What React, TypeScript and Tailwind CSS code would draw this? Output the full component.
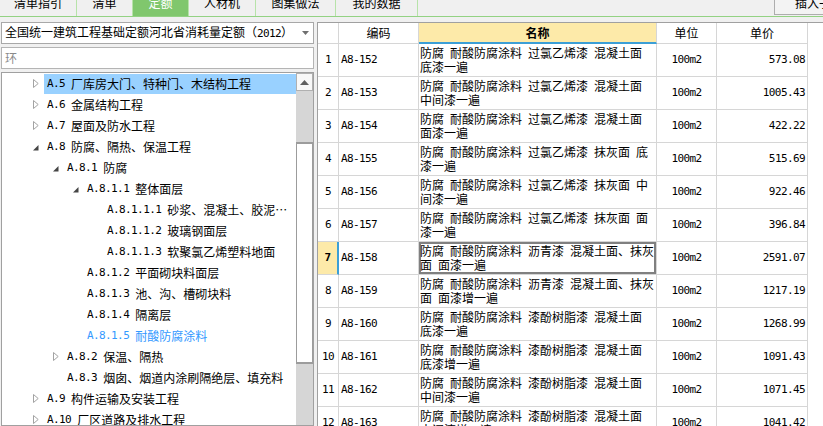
import React from "react";

const CJK = "font-['Noto_Sans_CJK_SC','Noto_Sans_CJK_JP',sans-serif]";
const MONO = "font-['DejaVu_Sans_Mono','Liberation_Mono',monospace] text-[11px] tracking-[-0.6px]";

const TABS = [
  { label: "清单指引", w: "w-[77px]" },
  { label: "清单", w: "w-[56px]" },
  { label: "定额", w: "w-[56px]", active: true },
  { label: "人材机", w: "w-[67px]" },
  { label: "图集做法", w: "w-[80px]" },
  { label: "我的数据", w: "w-[82px]" },
];

type TreeNode = {
  code: string;
  name: string;
  level: number;
  exp?: "open" | "closed";
  selected?: boolean;
  current?: boolean;
};

const TREE: TreeNode[] = [
  { code: "A.5", name: "厂库房大门、特种门、木结构工程", level: 0, exp: "closed", selected: true },
  { code: "A.6", name: "金属结构工程", level: 0, exp: "closed" },
  { code: "A.7", name: "屋面及防水工程", level: 0, exp: "closed" },
  { code: "A.8", name: "防腐、隔热、保温工程", level: 0, exp: "open" },
  { code: "A.8.1", name: "防腐", level: 1, exp: "open" },
  { code: "A.8.1.1", name: "整体面层", level: 2, exp: "open" },
  { code: "A.8.1.1.1", name: "砂浆、混凝土、胶泥…", level: 3 },
  { code: "A.8.1.1.2", name: "玻璃钢面层", level: 3 },
  { code: "A.8.1.1.3", name: "软聚氯乙烯塑料地面", level: 3 },
  { code: "A.8.1.2", name: "平面砌块料面层", level: 2 },
  { code: "A.8.1.3", name: "池、沟、槽砌块料", level: 2 },
  { code: "A.8.1.4", name: "隔离层", level: 2 },
  { code: "A.8.1.5", name: "耐酸防腐涂料", level: 2, current: true },
  { code: "A.8.2", name: "保温、隔热", level: 1, exp: "closed" },
  { code: "A.8.3", name: "烟囱、烟道内涂刷隔绝层、填充料", level: 1 },
  { code: "A.9", name: "构件运输及安装工程", level: 0, exp: "closed" },
  { code: "A.10", name: "厂区道路及排水工程", level: 0, exp: "closed" },
];

const INDENT = ["pl-[28px]", "pl-[48px]", "pl-[68px]", "pl-[88px]"];

const ROWS = [
  { no: 1, code: "A8-152", l1: "防腐 耐酸防腐涂料 过氯乙烯漆 混凝土面", l2: "底漆一遍", price: "573.08" },
  { no: 2, code: "A8-153", l1: "防腐 耐酸防腐涂料 过氯乙烯漆 混凝土面", l2: "中间漆一遍", price: "1005.43" },
  { no: 3, code: "A8-154", l1: "防腐 耐酸防腐涂料 过氯乙烯漆 混凝土面", l2: "面漆一遍", price: "422.22" },
  { no: 4, code: "A8-155", l1: "防腐 耐酸防腐涂料 过氯乙烯漆 抹灰面 底", l2: "漆一遍", price: "515.69" },
  { no: 5, code: "A8-156", l1: "防腐 耐酸防腐涂料 过氯乙烯漆 抹灰面 中", l2: "间漆一遍", price: "922.46" },
  { no: 6, code: "A8-157", l1: "防腐 耐酸防腐涂料 过氯乙烯漆 抹灰面 面", l2: "漆一遍", price: "396.84" },
  { no: 7, code: "A8-158", l1: "防腐 耐酸防腐涂料 沥青漆 混凝土面、抹灰", l2: "面 面漆一遍", price: "2591.07", sel: true },
  { no: 8, code: "A8-159", l1: "防腐 耐酸防腐涂料 沥青漆 混凝土面、抹灰", l2: "面 面漆增一遍", price: "1217.19" },
  { no: 9, code: "A8-160", l1: "防腐 耐酸防腐涂料 漆酚树脂漆 混凝土面", l2: "底漆一遍", price: "1268.99" },
  { no: 10, code: "A8-161", l1: "防腐 耐酸防腐涂料 漆酚树脂漆 混凝土面", l2: "底漆增一遍", price: "1091.43" },
  { no: 11, code: "A8-162", l1: "防腐 耐酸防腐涂料 漆酚树脂漆 混凝土面", l2: "中间漆一遍", price: "1071.45" },
  { no: 12, code: "A8-163", l1: "防腐 耐酸防腐涂料 漆酚树脂漆 混凝土面", l2: "中间漆增一遍", price: "1041.42" },
];

// SimSun-like half width spaces
const sp = (s: string) => s.replace(/ /g, "\u2002");

function Expander({ exp }: { exp?: "open" | "closed" }) {
  return (
    <div className="flex h-full w-[14px] shrink-0 items-center justify-start pl-[3px]">
      {exp === "closed" && (
        <svg width="6" height="9" viewBox="0 0 6 9">
          <path d="M0.5 0.5 L5.2 4.5 L0.5 8.5 Z" fill="#fff" stroke="#a3a3a3" />
        </svg>
      )}
      {exp === "open" && (
        <svg width="6" height="6" viewBox="0 0 6 6" className="mt-[3px]">
          <path d="M5.5 0 L5.5 5.5 L0 5.5 Z" fill="#454545" />
        </svg>
      )}
    </div>
  );
}

function TreeRow({ n }: { n: TreeNode }) {
  return (
    <div className={`flex h-[21px] items-center ${INDENT[n.level]}`}>
      {n.level < 3 ? <Expander exp={n.exp} /> : <div className="w-[14px] shrink-0" />}
      <div
        className={`flex h-[20px] flex-1 items-center overflow-hidden whitespace-nowrap pl-[3px] text-[12px] leading-[14px] ${
          n.selected ? "bg-[#99d1ff]" : ""
        } ${n.current ? "text-[#3399ff]" : "text-black"}`}
      >
        <span className={MONO}>{n.code}&nbsp;</span>
        <span>{n.name}</span>
      </div>
    </div>
  );
}

function Scrollbar() {
  return (
    <div className="flex w-[17px] shrink-0 flex-col bg-[#d6d6d6]">
      <div className="flex h-[18px] items-center justify-center border border-[#b0b0b0] bg-[#f8f8f8]">
        <svg width="9" height="5" viewBox="0 0 9 5">
          <path d="M0 5 L4.5 0 L9 5 Z" fill="#606060" />
        </svg>
      </div>
      <div className="h-[51px]" />
      <div className="h-[222px] border border-y-2 border-[#9c9c9c] bg-white" />
      <div className="flex-1" />
    </div>
  );
}

export default function App() {
  return (
    <div className={`h-[426px] w-[823px] overflow-hidden bg-[#f0f0f0] text-black ${CJK}`}>
      {/* tabs */}
      <div className="flex h-[17px] items-start border-b border-[#93d283]">
        {TABS.map((t) => (
          <div
            key={t.label}
            className={`flex h-[16px] shrink-0 justify-center overflow-hidden border-r border-[#b7e3a9] ${t.w} ${
              t.active ? "bg-[#80c76d] text-white" : "text-black"
            }`}
          >
            <span className="mt-[-3px] block text-[12px] leading-[12px]">{t.label}</span>
          </div>
        ))}
        <div className="ml-auto h-[15px] w-[49px] shrink-0 overflow-hidden">
          <div className="h-[15px] w-[90px] overflow-hidden border border-t-0 border-[#adadad] bg-[#f3f3f3] pl-[20px]">
            <span className="mt-[-3px] block whitespace-nowrap text-[12px] leading-[12px]">插入子目</span>
          </div>
        </div>
      </div>

      <div className="flex pt-[5px]">
        {/* left panel */}
        <div className="flex h-[404px] w-[314px] shrink-0 flex-col pl-[1px]">
          <div className="flex h-[22px] items-center border border-[#a8a8a8] bg-white pl-[3px] pr-[4px]">
            <span className="flex-1 whitespace-nowrap text-[12px] leading-[14px]">
              全国统一建筑工程基础定额河北省消耗量定额（<span className={MONO}>2012</span>）
            </span>
            <svg width="7" height="4" viewBox="0 0 7 4">
              <path d="M0 0 L7 0 L3.5 4 Z" fill="#6f6f6f" />
            </svg>
          </div>
          <div className="mt-[3px] flex h-[22px] items-center border border-[#b4b4b4] bg-white pl-[3px]">
            <span className="text-[12px] leading-[14px] text-[#8a8a8a]">环</span>
          </div>
          <div className="mt-[3px] flex flex-1 overflow-hidden border border-[#a0a0a0] bg-white">
            <div className="flex-1 overflow-hidden">
              {TREE.map((n) => (
                <TreeRow key={n.code} n={n} />
              ))}
            </div>
            <Scrollbar />
          </div>
        </div>

        {/* right panel */}
        <div className="ml-[3px] flex h-[404px] flex-1 flex-col overflow-hidden border-l border-t border-[#a0a0a0] bg-white">
          <div className="flex h-[21px] shrink-0 text-[12px] leading-[14px]">
            <div className="w-[21px] border-b border-r border-[#d6d6d6]" />
            <div className="flex w-[80px] items-center justify-center border-b border-r border-[#d6d6d6]">编码</div>
            <div className="flex w-[238px] items-center justify-center border-b-2 border-r border-[#d6d6d6] border-b-[#3c9fd6] bg-[#fdeaa9] font-bold">
              名称
            </div>
            <div className="flex w-[60px] items-center justify-center border-b border-r border-[#d6d6d6]">单位</div>
            <div className="flex w-[91px] items-center justify-center border-b border-r border-[#d6d6d6]">单价</div>
          </div>
          {ROWS.map((r) => (
            <div key={r.no} className="flex h-[33px] shrink-0">
              <div
                className={`flex w-[21px] items-center justify-center border-b border-[#d6d6d6] ${
                  r.sel ? "border-r-2 border-r-[#3c9fd6] bg-[#fdeaa9] font-bold" : "border-r"
                }`}
              >
                <span className={MONO}>{r.no}</span>
              </div>
              <div className="flex w-[80px] items-center border-b border-r border-[#d6d6d6] pl-[2px]">
                <span className={MONO}>{r.code}</span>
              </div>
              <div
                className={`flex w-[238px] flex-col justify-center border-b border-r border-[#d6d6d6] pl-[1px] text-[12px] leading-[14px] ${
                  r.sel ? "shadow-[inset_0_0_0_2px_#808080]" : ""
                }`}
              >
                <span className="block h-[14px] whitespace-nowrap">{sp(r.l1)}</span>
                <span className="block h-[14px] whitespace-nowrap">{sp(r.l2)}</span>
              </div>
              <div className="flex w-[60px] items-center justify-center border-b border-r border-[#d6d6d6]">
                <span className={MONO}>100m2</span>
              </div>
              <div className="flex w-[91px] items-center justify-end border-b border-r border-[#d6d6d6] pr-[2px]">
                <span className={MONO}>{r.price}</span>
              </div>
            </div>
          ))}
        </div>
      </div>
    </div>
  );
}
